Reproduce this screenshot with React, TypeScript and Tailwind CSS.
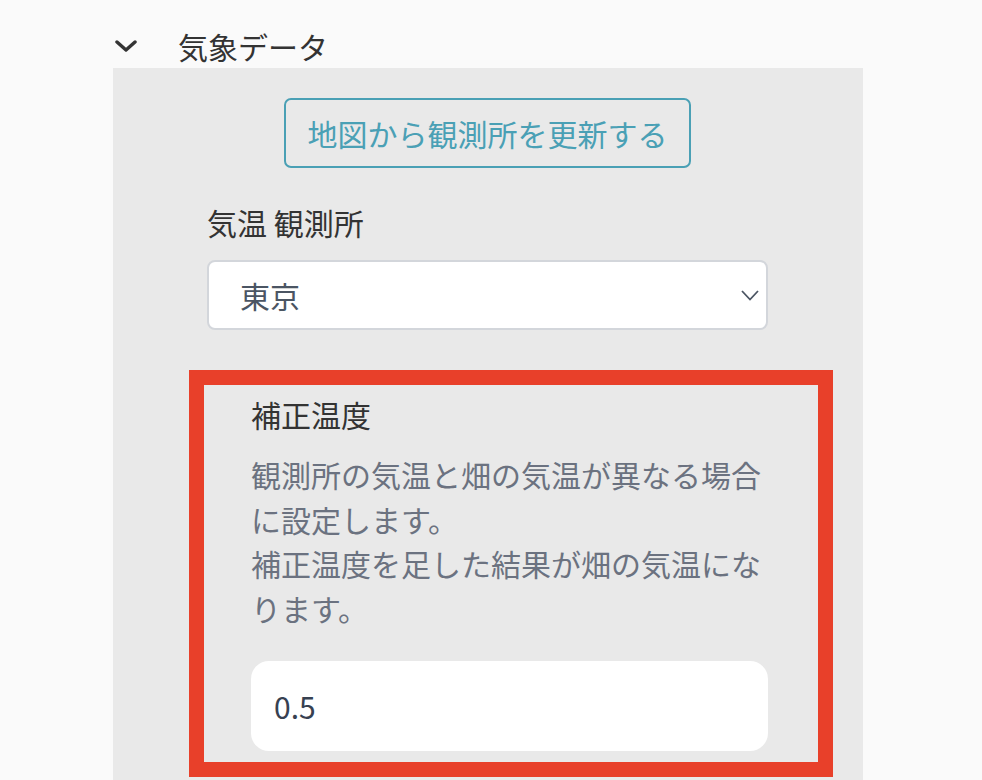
import React from 'react';

const font = "font-['Noto_Sans_CJK_JP','Noto_Sans',sans-serif]";

function ChevronDown({ className }: { className?: string }) {
    return (
        <svg viewBox="0 0 22 12" className={className} fill="none">
            <path d="M2 2 L11 10 L20 2" stroke="currentColor" strokeWidth="3.4" strokeLinecap="round" strokeLinejoin="round" />
        </svg>
    );
}

export default function App() {
    return (
        <div className={`h-[780px] w-[982px] overflow-hidden bg-[#fafafa] ${font}`}>
            {/* Section header */}
            <div className="ml-[113px] flex h-[68px] items-center pt-[24px]">
                <ChevronDown className="ml-[2px] h-[12px] w-[22px] text-[#333333]" />
                <span className="ml-[41px] text-[30px] leading-[44px] text-[#333333]">気象データ</span>
            </div>

            {/* Panel */}
            <div className="ml-[113px] h-[712px] w-[750px] bg-[#e9e9e9] pl-[94px] pr-[95px] pt-[30px]">
                <div className="flex justify-center">
                    <button className="flex h-[70px] w-[407px] items-center justify-center rounded-[7px] border-2 border-[#4aa0b5] text-[30px] text-[#4aa0b5]">
                        地図から観測所を更新する
                    </button>
                </div>

                <div className="mt-[34px] text-[30px] leading-[40px] text-[#333333]">気温 観測所</div>

                <div className="mt-[18px] flex h-[70px] items-center justify-between rounded-[8px] border-2 border-[#d3d6db] bg-white pl-[31px] pr-[7px]">
                    <span className="text-[30px] text-[#4b5563]">東京</span>
                    <svg viewBox="0 0 18 11" className="h-[11px] w-[18px] text-[#4b5563]" fill="none">
                        <path d="M1 1 L9 9.5 L17 1" stroke="currentColor" strokeWidth="1.8" />
                    </svg>
                </div>

                {/* Highlighted setting */}
                <div className="-ml-[18px] -mr-[65px] mt-[40px] border-[15px] border-[#e8402a] pb-[11px] pl-[47px] pr-[50px] pt-[9px]">
                    <div className="text-[30px] leading-[40px] text-[#333333]">補正温度</div>
                    <p className="mt-[18px] w-[517px] text-[30px] leading-[44.5px] text-[#6b7280]">
                        観測所の気温と畑の気温が異なる場合に設定します。
                        <br />
                        補正温度を足した結果が畑の気温になります。
                    </p>
                    <div className="mt-[31px] flex h-[90px] w-[517px] items-center rounded-[18px] bg-white pl-[23px]">
                        <span className="text-[30px] text-[#374151]">0.5</span>
                    </div>
                </div>
            </div>
        </div>
    );
}
